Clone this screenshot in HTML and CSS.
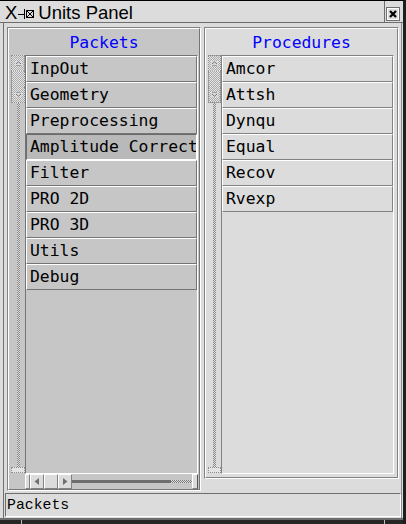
FILE: index.html
```html
<!DOCTYPE html>
<html>
<head>
<meta charset="utf-8">
<link rel="stylesheet" href="styles.css">
</head>
<body>
<div class="win">
  <div class="titlebar">
    <div class="title-main">
      <span class="tx">X</span>
      <svg class="pin" width="17" height="10" viewBox="0 0 17 10">
        <path d="M0 5.5H6" stroke="#000" fill="none"/>
        <path d="M6.5 0V10" stroke="#000" fill="none"/>
        <rect x="8.5" y="1.5" width="7" height="7" fill="none" stroke="#000"/>
        <path d="M9 2L15 8M15 2L9 8" stroke="#000" fill="none"/>
      </svg>
      <span class="tt">Units Panel</span>
    </div>
    <div class="title-close">
      <div class="closebtn">
        <svg width="8" height="8" viewBox="0 0 8 8"><path d="M1 1L7 7M7 1L1 7" stroke="#000" stroke-width="2.2" fill="none"/></svg>
      </div>
    </div>
  </div>
  <div class="mid">
    <div class="fl"></div>
    <div class="client">
      <div class="panels">
        <section class="panel pleft">
          <div class="panel-in">
            <div class="ph">Packets</div>
            <div class="prow">
              <div class="vscroll">
                <div class="vs-up"><svg width="7" height="5" viewBox="0 0 7 5"><path d="M1 3L3.5 0.8L6 3" stroke="#707070" fill="none"/><path d="M1 4.5H6" stroke="#a0a0a0"/></svg></div>
                <div class="vs-mid"></div>
                <div class="vs-dn"><svg width="7" height="5" viewBox="0 0 7 5"><path d="M1 0.5H6" stroke="#a0a0a0"/><path d="M1 2L3.5 4.2L6 2" stroke="#707070" fill="none"/></svg></div>
                <div class="vs-track"><div class="vs-line"></div></div>
                <div class="vs-end"></div>
              </div>
              <div class="listbox">
                <div class="item">InpOut</div>
                <div class="item">Geometry</div>
                <div class="item">Preprocessing</div>
                <div class="item sel">Amplitude Correct</div>
                <div class="item">Filter</div>
                <div class="item">PRO 2D</div>
                <div class="item">PRO 3D</div>
                <div class="item">Utils</div>
                <div class="item">Debug</div>
              </div>
            </div>
            <div class="hs">
              <div class="hsb hs-cap"></div>
              <div class="hsb hs-btn"><svg width="6" height="7" viewBox="0 0 6 7"><path d="M5 0V7L0.5 3.5Z" fill="#707070"/></svg></div>
              <div class="hsb hs-btn"></div>
              <div class="hsb hs-btn"><svg width="6" height="7" viewBox="0 0 6 7"><path d="M1 0V7L5.5 3.5Z" fill="#707070"/></svg></div>
              <div class="hs-bar"><div class="hs-line"></div></div>
              <div class="hs-chk"><div class="hs-cline"></div></div>
              <div class="hsb hs-cap2"></div>
            </div>
          </div>
        </section>
        <section class="panel pright">
          <div class="panel-in">
            <div class="ph">Procedures</div>
            <div class="prow">
              <div class="vscroll vs-r">
                <div class="vs-up"><svg width="7" height="5" viewBox="0 0 7 5"><path d="M1 3L3.5 0.8L6 3" stroke="#707070" fill="none"/><path d="M1 4.5H6" stroke="#a0a0a0"/></svg></div>
                <div class="vs-mid"></div>
                <div class="vs-dn"><svg width="7" height="5" viewBox="0 0 7 5"><path d="M1 0.5H6" stroke="#a0a0a0"/><path d="M1 2L3.5 4.2L6 2" stroke="#707070" fill="none"/></svg></div>
                <div class="vs-track"><div class="vs-line"></div></div>
                <div class="vs-end"></div>
              </div>
              <div class="listbox">
                <div class="item">Amcor</div>
                <div class="item">Attsh</div>
                <div class="item">Dynqu</div>
                <div class="item">Equal</div>
                <div class="item">Recov</div>
                <div class="item">Rvexp</div>
              </div>
            </div>
          </div>
        </section>
      </div>
      <div class="status">Packets</div>
    </div>
    <div class="fr"></div>
  </div>
  <div class="bf">
    <div class="bf1"></div>
    <div class="bf2"></div>
    <div class="bf3"></div>
  </div>
</div>
</body>
</html>
```
FILE: styles.css
```css
* { box-sizing: border-box; }
html, body { margin: 0; padding: 0; }
body {
  width: 406px;
  height: 524px;
  overflow: hidden;
  background: #dcdcdc;
  font-family: "DejaVu Sans Mono", monospace;
}
.win {
  width: 406px;
  height: 524px;
  display: flex;
  flex-direction: column;
  border-top: 1px solid #000;
  border-right: 3px solid #1e1e1e;
  background: #dcdcdc;
}
.titlebar {
  height: 22px;
  flex: none;
  display: flex;
  border-bottom: 1px solid #6e6e6e;
}
.title-main {
  flex: 1;
  display: flex;
  align-items: flex-start;
  padding: 2px 0 0 5px;
  font: 18.5px/20px "Liberation Sans", Arial, sans-serif;
  color: #000;
}
.pin { margin: 6px 0 0 1px; flex: none; }
.tt { margin-left: 3px; }
.title-close {
  width: 19px;
  border-left: 1px solid #6e6e6e;
  padding: 6px 0 0 1px;
}
.closebtn {
  width: 14px;
  height: 14px;
  border: 1px solid #6e6e6e;
  box-shadow: inset 0 0 0 1px #fff;
  background: #dcdcdc;
  display: flex;
  align-items: center;
  justify-content: center;
}
.mid {
  flex: 1;
  display: flex;
}
.fl {
  width: 4px;
  border-right: 1px solid #6e6e6e;
}
.fr {
  width: 2px;
  border-left: 1px solid #8a8a8a;
}
.client {
  flex: 1;
  display: flex;
  flex-direction: column;
  padding: 4px 0 1px 0;
}
.panels {
  display: flex;
  align-items: flex-start;
  gap: 3px;
  padding-left: 3px;
  height: 464px;
  flex: none;
}
.panel {
  border: 1px solid;
  border-color: #828282 #fff #fff #828282;
}
.panel-in {
  height: 100%;
  border: 1px solid;
  border-color: #fff #828282 #828282 #fff;
}
.pleft { width: 194px; height: 464px; }
.pleft .panel-in { background: #c6c6c6; border-right-color: #757575; border-bottom-color: #757575; }
.pright { width: 195px; height: 452px; }
.pright .panel-in { background: #dcdcdc; }
.ph {
  height: 26px;
  padding-top: 2px;
  text-align: center;
  color: #0000ff;
  font-size: 16.4px;
  line-height: 24px;
}
.prow {
  display: flex;
  height: 419px;
  padding-left: 2px;
}
.vscroll {
  width: 14px;
  display: flex;
  flex-direction: column;
  padding-bottom: 1px;
}
.vs-r { width: 13px; }
.vs-up, .vs-dn {
  height: 16px;
  border: 1px dotted #8c8c8c;
  background: repeating-conic-gradient(#ababab 0 25%, #e4e4e4 0 50%) 0 0 / 2px 2px;
  display: flex;
  align-items: center;
  justify-content: center;
}
.vs-up { border-bottom: none; }
.vs-dn { border-top: none; }
.vs-up svg, .vs-dn svg { background: #dcdcdc; }
.vs-mid {
  height: 16px;
  border-left: 1px dotted #8c8c8c;
  border-right: 1px dotted #8c8c8c;
  background: repeating-conic-gradient(#ababab 0 25%, #e4e4e4 0 50%) 0 0 / 2px 2px;
}
.vs-track {
  flex: 1;
}
.vs-line {
  width: 3px;
  height: 100%;
  margin-left: 6px;
  background: repeating-conic-gradient(#8a8a8a 0 25%, #dcdcdc 0 50%) 0 0 / 2px 2px;
}
.vs-r .vs-line { margin-left: 5px; }
.vs-end {
  height: 6px;
  border: 1px dotted #8c8c8c;
  background: #e4e4e4;
}
.listbox {
  width: 173px;
  height: 419px;
  border: 1px solid;
  border-color: #757575 #fff #fff #757575;
  overflow: hidden;
}
.pright .listbox { border-color: #828282 #fff #fff #828282; }
.item {
  height: 26px;
  border: 1px solid;
  border-color: #fff #757575 #757575 #fff;
  padding-left: 3px;
  font-size: 16.4px;
  line-height: 24px;
  white-space: nowrap;
  overflow: hidden;
  color: #000;
}
.pright .item { border-color: #fff #828282 #828282 #fff; }
.item.sel {
  border-color: #6a6a6a #fff #fff #6a6a6a;
  background: #b9b9b9;
}
.hs {
  display: flex;
  height: 15px;
  margin-left: 16px;
  width: 173px;
}
.hsb {
  background: #dcdcdc;
  border: 1px solid;
  border-color: #fff #828282 #828282 #fff;
  display: flex;
  align-items: center;
  justify-content: center;
}
.hs-cap { width: 5px; }
.hs-btn { width: 14px; }
.hs-cap2 { width: 6px; border-right-color: #555; }
.hs-bar {
  width: 99px;
  display: flex;
  align-items: center;
}
.hs-line { width: 100%; height: 3px; background: #6e6e6e; }
.hs-chk {
  width: 21px;
  display: flex;
  align-items: center;
}
.hs-cline {
  width: 100%;
  height: 3px;
  background: repeating-conic-gradient(#7a7a7a 0 25%, #dcdcdc 0 50%) 0 0 / 2px 2px;
}
.status {
  margin: 2px 0 0 1px;
  height: 24px;
  flex: none;
  border: 1px solid;
  border-color: #6e6e6e #fff #fff #6e6e6e;
  padding-left: 1px;
  font: 14.8px/22px "Liberation Mono", monospace;
  color: #000;
}
.bf {
  height: 6px;
  flex: none;
  display: flex;
  background: #262626;
  border-top: 2px solid #6e6e6e;
}
.bf1 { width: 21px; }
.bf2 { width: 363px; border-left: 1px solid #bcbcbc; }
.bf3 { flex: 1; border-left: 1px solid #bcbcbc; }
```
